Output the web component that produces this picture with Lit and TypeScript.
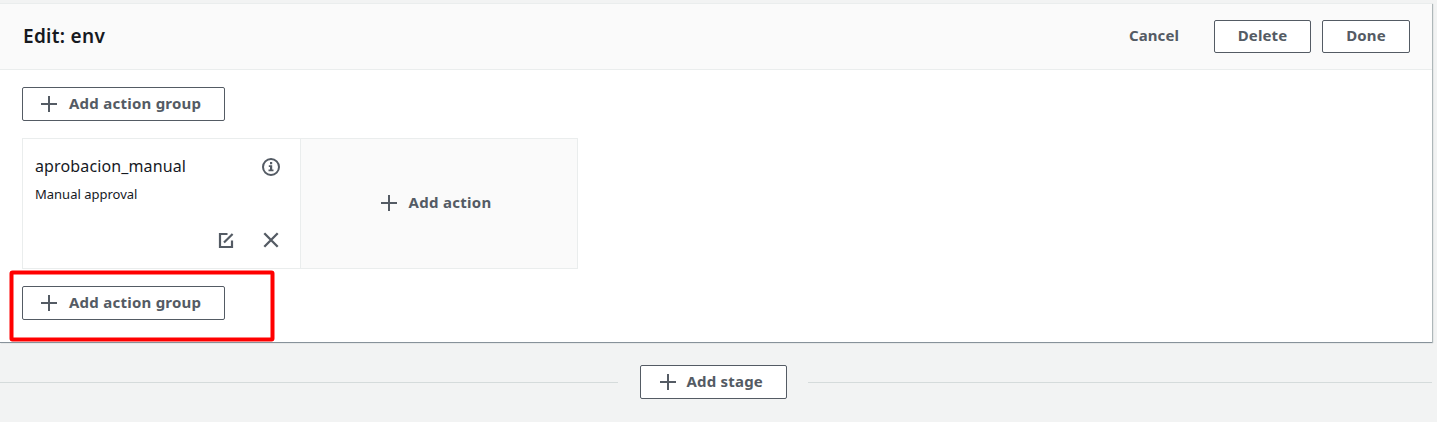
import { LitElement, html, css, svg } from "lit";
import { customElement } from "lit/decorators.js";

const plus = html`<svg class="plus" width="16" height="16" viewBox="0 0 16 16">
  ${svg`<path d="M8 0V16M0 8H16" fill="none" stroke="#545b64" stroke-width="2"/>`}
</svg>`;

@customElement("app-root")
export class AppRoot extends LitElement {
  static styles = css`
    :host {
      display: block;
      height: 422px;
      box-sizing: border-box;
      padding-top: 3px;
      overflow: hidden;
      background: #f2f3f3;
      color: #16191f;
      font-family: "Noto Sans", sans-serif;
    }
    * { box-sizing: border-box; }
    svg { display: block; flex: none; }
    .panel {
      position: relative;
      width: 1432px;
      height: 339px;
      background: #fff;
      border-top: 1px solid #eaeded;
      box-shadow: 0 1px 0 0 #87929a, 1px 1px 1px 0 rgba(0, 28, 36, 0.28);
    }
    .header {
      display: flex;
      align-items: center;
      height: 66px;
      padding: 0 22px 0 23px;
      background: #fafafa;
      border-bottom: 1px solid #eaeded;
    }
    .title {
      margin: 0;
      flex: 1;
      padding-bottom: 2px;
      font-size: 19px;
      line-height: 24px;
      font-weight: 600;
      letter-spacing: 0.3px;
    }
    .btn {
      display: flex;
      align-items: center;
      justify-content: center;
      height: 34px;
      padding: 0;
      border: 1px solid #545b64;
      border-radius: 2px;
      background: #fff;
      color: #545b64;
      font: 700 15px/20px "Noto Sans", sans-serif;
      white-space: nowrap;
    }
    .btn span { padding-bottom: 2px; }
    .header .btn span { padding-bottom: 4px; }
    .label {
      padding-bottom: 2px;
      color: #545b64;
      font-size: 15px;
      line-height: 20px;
      font-weight: 700;
      letter-spacing: 0.3px;
      white-space: nowrap;
    }
    .header .btn { height: 33px; letter-spacing: 0.1px; }
    .header .cancel { border: 0; background: none; width: 50px; margin-right: 35px; }
    .delete { width: 97px; margin-right: 11px; }
    .done { width: 88px; }
    .body { padding: 17px 22px 0; }
    .group { width: 203px; justify-content: flex-start; padding-left: 18px; gap: 12px; letter-spacing: 0.24px; }
    .actions {
      display: flex;
      width: 556px;
      height: 131px;
      margin: 17px 0;
      border: 1px solid #eaeded;
    }
    .action {
      display: flex;
      flex-direction: column;
      width: 278px;
      padding: 16px 20px 19px 12px;
      border-right: 1px solid #eaeded;
    }
    .row { display: flex; justify-content: space-between; align-items: center; height: 24px; }
    .name { font-size: 16px; line-height: 22px; padding-bottom: 2px; letter-spacing: 0.13px; }
    .kind { font-size: 13px; line-height: 20px; margin-top: 5px; }
    .tools { display: flex; justify-content: flex-end; gap: 28px; margin-top: auto; }
    .add {
      flex: 1;
      display: flex;
      align-items: center;
      padding: 0 0 1px 80px;
      gap: 11.5px;
      background: #fafafa;
    }
    .callout {
      position: absolute;
      left: 9px;
      top: 266px;
    }
    .stage { display: flex; align-items: center; width: 1432px; height: 34px; margin-top: 23px; }
    .rule { height: 1px; background: #d5dbdb; margin-top: 1px; }
    .left { width: 618px; }
    .right { flex: 1; }
    .stage .btn {
      width: 147px;
      margin: 0 21px 0 22px;
      justify-content: flex-start;
      padding-left: 18.5px;
      gap: 11px;
      letter-spacing: 0.2px;
    }
  `;

  render() {
    return html`
      <section class="panel">
        <header class="header">
          <h2 class="title">Edit: env</h2>
          <button class="btn cancel"><span>Cancel</span></button>
          <button class="btn delete"><span>Delete</span></button>
          <button class="btn done"><span>Done</span></button>
        </header>
        <div class="body">
          <button class="btn group">${plus}<span>Add action group</span></button>
          <div class="actions">
            <div class="action">
              <div class="row">
                <span class="name">aprobacion_manual</span>
                <svg width="18" height="18" viewBox="0 0 18 18">
                  <circle cx="9" cy="9" r="8" fill="none" stroke="#545b64" stroke-width="2" />
                  <path d="M8 4h2.2v2.2H8zM6.8 7.3h3.4v4.2h1.3v1.7H6.5v-1.7H8V9H6.8z" fill="#545b64" />
                </svg>
              </div>
              <div class="kind">Manual approval</div>
              <div class="tools">
                <svg width="16" height="18" viewBox="0 0 16 18">
                  <path d="M9.5 3H2V16H14V9.5M14.6 3L6 11.5" fill="none" stroke="#545b64" stroke-width="2.2" />
                </svg>
                <svg width="18" height="18" viewBox="0 0 18 18">
                  <path d="M2.3 2.3L15.7 15.7M15.7 2.3L2.3 15.7" fill="none" stroke="#545b64" stroke-width="2.3" />
                </svg>
              </div>
            </div>
            <div class="add">${plus}<span class="label">Add action</span></div>
          </div>
          <button class="btn group">${plus}<span>Add action group</span></button>
        </div>
        <svg class="callout" width="266" height="73" viewBox="0 0 266 73">
          <rect x="2.5" y="2.5" width="261" height="67" rx="1" fill="none" stroke="#f00" stroke-width="4" />
        </svg>
      </section>
      <div class="stage">
        <div class="rule left"></div>
        <button class="btn">${plus}<span>Add stage</span></button>
        <div class="rule right"></div>
      </div>
    `;
  }
}
